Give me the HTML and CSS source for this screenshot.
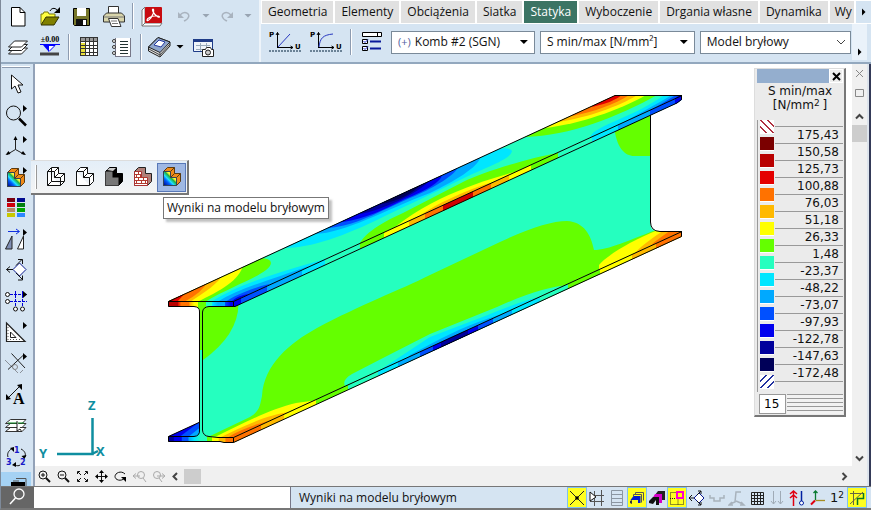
FILE: index.html
```html
<!DOCTYPE html>
<html lang="pl">
<head>
<meta charset="utf-8">
<title>Model bryłowy</title>
<link rel="stylesheet" href="styles.css">
</head>
<body>
<div class="app">
<header class="top">
  <div class="tools">
    <div class="tool-row">
      <button class="tool" aria-label="Nowy"><svg width="28" height="26" viewBox="0 0 28 26"><path d="M7.5 4.500h8.500l5 5v13.500h-13.500z" fill="#fff" stroke="#000"/><path d="M16 4.500v5h5" fill="none" stroke="#000"/></svg></button>
      <button class="tool" aria-label="Otwórz"><svg width="28" height="26" viewBox="0 0 28 26"><path d="M5 21V11h2l1-2h4l1 2h6v3" fill="#ffff40" stroke="#77770a"/><path d="M5 22l5-8h13l-5 8z" fill="#808000" stroke="#333300"/><path d="M14 8c2-4 6-3 8 0" fill="none" stroke="#000"/><path d="M24 4v6h-6z"/></svg></button>
      <button class="tool" aria-label="Zapisz"><svg width="28" height="26" viewBox="0 0 28 26"><path d="M5.500 5.500h16v17h-15l-1-1z" fill="#77772a" stroke="#000"/><path d="M9 5h9v8H9z" fill="#fff"/><path d="M8 16h11v6H8z" fill="#111"/><path d="M15 17h3v5h-3z" fill="#fff"/></svg></button>
      <button class="tool" aria-label="Drukuj"><svg width="28" height="26" viewBox="0 0 28 26"><path d="M8.500 10V3.500h10V10" fill="#fff" stroke="#333"/><path d="M3.500 13l3-3h15l3 3v6h-21z" fill="#d8d4aa" stroke="#333"/><path d="M4 14h20" stroke="#777"/><path d="M8.500 15.500h9.500l3 8h-9.500z" fill="#fff" stroke="#333"/><path d="M11 18h6M12 20.500h6" stroke="#777"/></svg></button>
      <i class="sep"></i>
      <button class="tool" aria-label="PDF"><svg width="28" height="26" viewBox="0 0 28 26"><path d="M4 7l3-3v16l-3 3z" fill="#fff" stroke="#777"/><path d="M4 23l3-3h17l-2 3z" fill="#fff" stroke="#777"/><rect x="7" y="4" width="17" height="16" rx="1" fill="#c80b10"/><path d="M15 6c-1.500 0 0 5 5 8 3 1 1-2-3-1-3 0-8 2-8 4s4-1 6-6c.7-2 1-5 0-5z" fill="none" stroke="#fff" stroke-width="1.200"/></svg></button>
      <button class="tool" aria-label="Cofnij"><svg width="28" height="26" viewBox="0 0 28 26"><path d="M10 12c5-5 11-1 8 3-1 2-2 2-4 3" fill="none" stroke="#a9b3bf" stroke-width="1.500"/><path d="M8 9v6h6z" fill="#a9b3bf"/></svg></button>
      <i class="caret dim"></i>
      <button class="tool slim" aria-label="Ponów"><svg width="28" height="26" viewBox="0 0 28 26"><path d="M18 12c-5-5-11-1-8 3 1 2 2 2 4 3" fill="none" stroke="#a9b3bf" stroke-width="1.500"/><path d="M20 9v6h-6z" fill="#a9b3bf"/></svg></button>
      <i class="caret dim"></i>
    </div>
    <div class="tool-row">
      <button class="tool" aria-label="Warstwy"><svg width="28" height="26" viewBox="0 0 28 26"><g fill="#fff" stroke="#222"><path d="M4.500 20l6-6h13l-6 6z"/><path d="M4.500 16.500l6-6h13l-6 6z"/><path d="M4.500 13l6-6h13l-6 6z"/></g></svg></button>
      <button class="tool" aria-label="Poziom"><svg width="28" height="26" viewBox="0 0 28 26"><text x="14" y="8" class="level" text-anchor="middle">±0.00</text><path d="M4 10.500h20" stroke="#00f"/><path d="M7 11h6v7z" fill="#00f"/><path d="M13 17.500l6-6h-6" fill="#fff" stroke="#00f"/><path d="M4 18.500h19v3H4z" fill="#444"/></svg></button>
      <i class="sep"></i>
      <button class="tool wide" aria-label="Tabela"><svg width="28" height="26" viewBox="0 0 28 26"><path d="M5 3h18v19H5z" fill="#fff"/><path d="M5 3h18v5H5z" fill="#999"/><path d="M5 9h6v13H5z" fill="#e8e03c"/><path d="M5.500 3v19M10.500 3v19M14.500 3v19M18.500 3v19M22.500 3v19M5 3.500h18M5 7.500h18M5 11.500h18M5 14.500h18M5 18.500h18M5 21.500h18" stroke="#333"/></svg></button>
      <button class="tool wide" aria-label="Raport"><svg width="28" height="26" viewBox="0 0 28 26"><path d="M7 4h16v18H7z" fill="#fff"/><path d="M7.500 4v18M22.500 4v19M7 22.500h16" stroke="#778"/><path d="M12 7.500h8M12 10.500h8M12 13.500h8M12 16.500h8M12 19.500h8" stroke="#233" /><g fill="#fff" stroke="#333"><circle cx="6" cy="7" r="1.500"/><circle cx="6" cy="13" r="1.500"/><circle cx="6" cy="19" r="1.500"/></g></svg></button>
      <i class="sep"></i>
      <button class="tool slim" aria-label="Biblioteka"><svg width="28" height="26" viewBox="0 0 28 26"><path d="M3.500 13L13 3.500 25 8v4L15 23 3.500 17z" fill="#ddd" stroke="#222"/><path d="M3.500 13L13 3.500 25 8 15 18.500z" fill="#8fa6cc" stroke="#222"/><path d="M9 11l5-5 6 2-4 5z" fill="#fff" stroke="#2338a0"/><path d="M15 18.500v4M4 15l11 6 10-11" fill="none" stroke="#444"/></svg></button>
      <i class="caret"></i>
      <button class="tool wide" aria-label="Zrzut ekranu"><svg width="28" height="26" viewBox="0 0 28 26"><path d="M4.500 5.500h19v12h-19z" fill="#eef4fa" stroke="#1f3c88"/><path d="M4 5h20v3H4z" fill="#1f3c88"/><path d="M7 11.500h14M7 15.500h8M11.500 9v8M17.500 9v4" stroke="#9ab"/><path d="M13.500 15.500h3l1-2h4l1 2h2v7h-11z" fill="#fff" stroke="#222"/><circle cx="19" cy="18.500" r="2.500" fill="#ccc" stroke="#222"/></svg></button>
    </div>
  </div>
  <div class="ribbon">
    <nav class="tabs">
      <button class="tab">Geometria</button><button class="tab">Elementy</button><button class="tab">Obciążenia</button><button class="tab">Siatka</button><button class="tab on">Statyka</button><button class="tab">Wyboczenie</button><button class="tab">Drgania własne</button><button class="tab">Dynamika</button><button class="tab cut">Wy</button>
      <button class="more" aria-label="Więcej zakładek"><i class="play"></i></button>
    </nav>
    <div class="ribbon-row">
      <button class="curve" aria-label="Analiza liniowa"><svg width="34" height="24" viewBox="0 0 34 24"><path d="M9.500 18V2.500M8 5l1.500-2.500L11 5M9 17.500h16M22.500 16l2.500 1.500-2.500 1.500" fill="none" stroke="#000"/><path d="M10 17L22 4" stroke="#2838c0"/><path d="M1 21h32" stroke="#6b8296" stroke-width="2" stroke-dasharray="2 1"/><text x="1" y="7" class="mini">P</text><text x="27" y="19" class="mini">U</text></svg></button>
      <button class="curve second" aria-label="Analiza nieliniowa"><svg width="34" height="24" viewBox="0 0 34 24"><path d="M9.500 18V2.500M8 5l1.500-2.500L11 5M9 17.500h16M22.500 16l2.500 1.500-2.500 1.500" fill="none" stroke="#000"/><path d="M10 17C11 8 14 5 24 4" fill="none" stroke="#2838c0"/><path d="M1 21h32" stroke="#6b8296" stroke-width="2" stroke-dasharray="2 1"/><text x="1" y="7" class="mini">P</text><text x="27" y="19" class="mini">U</text></svg></button>
      <i class="sep"></i>
      <button class="curve opts" aria-label="Opcje wyników"><svg width="22" height="22" viewBox="0 0 22 22"><path d="M1.500 1.500h19v4h-19z" fill="#fff" stroke="#000"/><path d="M16.500 1v5" stroke="#000"/><g fill="#fff" stroke="#000"><path d="M1.500 8.500h5v4h-5zM1.500 15.500h5v4h-5z"/></g><path d="M9 10.500h11M9 17.500h11" stroke="#0a1a9a" stroke-width="2"/><path d="M2.500 10l1.500 1.500 3-3M2.500 17l1.500 1.500 3-3" fill="none" stroke="#2030d0"/></svg></button>
      <label class="combo c1"><span class="plus">(+)</span><select aria-label="Kombinacja"><option>Komb #2 (SGN)</option></select><i class="caret"></i></label>
      <label class="combo c2"><select aria-label="Wielkość"><option>S min/max [N/mm²]</option></select><i class="caret"></i></label>
      <label class="combo c3"><select aria-label="Model"><option>Model bryłowy</option></select><svg class="chev" width="10" height="6" viewBox="0 0 10 6"><path d="M1 1l4 4 4-4" fill="none" stroke="#444"/></svg></label>
      <button class="more low" aria-label="Więcej"><i class="play"></i></button>
    </div>
  </div>
</header>

<main class="work">
  <aside class="side">
    <i class="grip"></i>
    <button aria-label="Wybór"><svg width="28" height="28" viewBox="0 0 28 28"><path d="M9.500 4v14l3.500-3 3 7 3-1-3-7h5z" fill="#fff" stroke="#111"/></svg></button>
    <button aria-label="Powiększenie"><svg width="28" height="28" viewBox="0 0 28 28"><circle cx="11.500" cy="11" r="7" fill="none" stroke="#111"/><path d="M17 16.500l7 7" stroke="#000" stroke-width="2.500"/><path d="M21 3l4 3.500-4 3.500z"/></svg></button>
    <button aria-label="Widok"><svg width="28" height="28" viewBox="0 0 28 28"><path d="M13.500 5v11.500L5 21.500M13.500 16.500l9 5" fill="none" stroke="#222"/><path d="M13.500 3l2 4h-4zM3.500 22l3-4 2 3zM24 22l-3-4-2 3zM21 3l4 3.500-4 3.500z"/></svg></button>
    <button aria-label="Tryb wyników"><svg width="28" height="28" viewBox="0 0 28 28"><use href="#solid-result"/><path d="M21 3l4 3.500-4 3.500z"/></svg></button>
    <button aria-label="Kolory"><svg width="28" height="28" viewBox="0 0 28 28"><path fill="#7a0010" d="M5 3h8v4H5z"/><path fill="#000a90" d="M15 3h8v4h-8z"/><path fill="#d0000c" d="M5 8h8v4H5z"/><path fill="#008010" d="M15 8h8v4h-8z"/><path fill="#b58a68" d="M5 13h8v4H5z"/><path fill="#00a800" d="M15 13h8v4h-8z"/><path fill="#c8c800" d="M5 18h8v4H5z"/><path fill="#2c86ff" d="M15 18h8v4h-8z"/></svg></button>
    <button aria-label="Lustro"><svg width="28" height="28" viewBox="0 0 28 28"><path d="M6 5.500h11M14 3l3.500 2.500L14 8" fill="none" stroke="#1030e0"/><path d="M3.500 23h6.500V10z" fill="#7f8eb4" stroke="#222"/><path d="M15.500 23h6V10z" fill="#fff" stroke="#222"/><path d="M21 3l4 3.500-4 3.500z"/></svg></button>
    <button aria-label="Przekrój"><svg width="28" height="28" viewBox="0 0 28 28"><path d="M17.500 6l6.500 6.500-6.500 6.500-6.500-6.500z" fill="#fff" stroke="#0a1a90"/><path d="M11 12.500H4.500M8 9.500l-3.500 3 3.500 3M14 8.500l6-6M16 2.500h4.500V7M14 16l6.500 6.500M16 23h4.500v-4.500" fill="none" stroke="#111"/></svg></button>
    <button aria-label="Osie konstrukcyjne"><svg width="28" height="28" viewBox="0 0 28 28"><path d="M8 6.500h17M8 13.500h17M13.500 3v15M20.500 3v15" stroke="#0000d8" stroke-dasharray="3 1"/><g fill="#fff" stroke="#111"><circle cx="5.500" cy="6.500" r="2"/><circle cx="5.500" cy="13.500" r="2"/><circle cx="13.500" cy="21" r="2"/><circle cx="20.500" cy="21" r="2"/></g><path d="M21 3l4 3.500-4 3.500z"/></svg></button>
    <button aria-label="Geometria"><svg width="28" height="28" viewBox="0 0 28 28"><path d="M4.500 4v18.500H23z" fill="#fff" stroke="#222" stroke-width="1.200"/><path d="M8.500 13v5.500H14z" fill="none" stroke="#222"/><path d="M6 8v13M8 20.500h12" stroke="#555" stroke-dasharray="1 2"/><path d="M21 3l4 3.500-4 3.500z"/></svg></button>
    <button aria-label="Edycja linii"><svg width="28" height="28" viewBox="0 0 28 28"><path d="M3 10l13 13M18 23l3-3" stroke="#8b9199"/><path d="M9.500 3.500L23 18M6 19.500L21 5.500" stroke="#222"/><circle cx="13" cy="17" r="2.500" fill="none" stroke="#888"/><path d="M21 3l4 3.500-4 3.500z"/></svg></button>
    <button aria-label="Opis"><svg width="28" height="28" viewBox="0 0 28 28"><path d="M6 17L18 5" stroke="#111"/><path d="M4 19v-6l5 5zM20 3v6l-5-5z"/><text x="11" y="23" class="serif-a">A</text></svg></button>
    <button aria-label="Warstwy"><svg width="28" height="28" viewBox="0 0 28 28"><g fill="#fff" stroke="#333"><path d="M3.500 19.500l5-4H24l-4 4z"/><path d="M3.500 15.500l5-4H24l-4 4z"/><path d="M3.500 11.500l5-4H24l-4 4z"/></g><path d="M6 11h16" stroke="#0a8a20"/><path d="M15 9v10l3-2 2 3" fill="#fff" stroke="#222"/></svg></button>
    <button aria-label="Numeracja"><svg width="28" height="28" viewBox="0 0 28 28"><path d="M10 5.500C6 8 5 11 6 14M19 6c4 2 5 5 4 8M18 22c-1 1-3 1-5 0" fill="none" stroke="#111"/><path d="M12 4v5L8 5zM24.500 12l-2 4-3-3zM10 22l4-3v5z"/><text x="12" y="10" class="num">1</text><text x="4" y="22" class="num">3</text><text x="18" y="22" class="num">2</text></svg></button>
    <button class="lit" aria-label="Okna"><svg width="28" height="28" viewBox="0 0 28 28"><path d="M14 4.500h10v8M17 7h-6" fill="none" stroke="#555"/><path d="M9 8h14v6H9z"/></svg></button>
  </aside>

  <section class="stage">
    <svg class="model" viewBox="35 64 817 402" preserveAspectRatio="xMinYMin meet" role="img" aria-label="Model belki dwuteowej z mapą naprężeń">
      <defs>
        <clipPath id="topFace"><path d="M168 301.500L615 95.500H682L233.500 301.500z"/></clipPath>
        <clipPath id="topSide"><path d="M233.500 301.500L682 95.500V99.500L677 103 235 306.500h-1.500z"/></clipPath>
        <clipPath id="web"><path d="M203 312Q203 306.500 209 306.500H235L650.500 115V225Q651 231.500 660 231.500H682L233.500 437.500 209 436.500Q203 436 203 430z"/></clipPath>
        <clipPath id="lowSide"><path d="M233.500 437.500L682 231.500V236.500L233.500 442.500z"/></clipPath>
        <clipPath id="lowFace"><path d="M168 436.500L200 422V430Q200 436.500 194 436.500z"/></clipPath>
        <linearGradient id="cap" gradientUnits="userSpaceOnUse" x1="168" x2="234" y1="0" y2="0"><stop offset=".15" stop-color="#b90000"/><stop offset=".15" stop-color="#e40000"/><stop offset=".2" stop-color="#ff7200"/><stop offset=".31" stop-color="#ff7200"/><stop offset=".34" stop-color="#ffb900"/><stop offset=".4" stop-color="#ffff00"/><stop offset=".46" stop-color="#ffff00"/><stop offset=".46" stop-color="#64ff00"/><stop offset=".57" stop-color="#64ff00"/><stop offset=".57" stop-color="#25ffbf"/><stop offset=".67" stop-color="#25ffbf"/><stop offset=".67" stop-color="#00e6ff"/><stop offset=".76" stop-color="#00a9ff"/><stop offset=".86" stop-color="#00a9ff"/><stop offset=".86" stop-color="#0050ff"/><stop offset=".95" stop-color="#0000ee"/></linearGradient>
        <linearGradient id="foot" gradientUnits="userSpaceOnUse" x1="168" x2="234" y1="0" y2="0"><stop offset=".08" stop-color="#00009c"/><stop offset=".1" stop-color="#0000ee"/><stop offset=".2" stop-color="#0000ee"/><stop offset=".22" stop-color="#0050ff"/><stop offset=".3" stop-color="#0050ff"/><stop offset=".32" stop-color="#00a9ff"/><stop offset=".4" stop-color="#00e6ff"/><stop offset=".5" stop-color="#25ffbf"/><stop offset=".59" stop-color="#25ffbf"/><stop offset=".59" stop-color="#64ff00"/><stop offset=".67" stop-color="#64ff00"/><stop offset=".67" stop-color="#ffff00"/><stop offset=".76" stop-color="#ffff00"/><stop offset=".78" stop-color="#ffb900"/><stop offset=".86" stop-color="#ffb900"/><stop offset=".88" stop-color="#ff7200"/></linearGradient>
      </defs>

      <g clip-path="url(#web)">
        <path fill="#25ffbf" d="M190 90H700V450H190z"/>
        <path fill="#64ff00" d="M238.500 304Q238 335 203 360V300z"/>
        <path fill="#64ff00" d="M614 125C616 148 625 156 634 156H651V110z"/>
        <path fill="#64ff00" d="M208 437L250 417C260 411 260 405 262 396C264 364 290 343 317 328C360 305 400 290 430 275L500 242C530 228 552 221 567 221C584 222 591 235 594 250C608 250 630 240 656 230L690 225V260L233 445z"/>
        <path fill="#ffff00" d="M213 438C240 425 270 409 296 403L318 400V450H213z"/>
        <path fill="#ffb900" d="M219 438C245 425 270 414 290 412L280 425V450H219z"/>
        <path fill="#ff7200" d="M227 438C240 429 258 424 268 421L250 450H227z"/>
        <path fill="#25ffbf" d="M350 390C342 386 342 380 352 374L383 358 430 334 497 307C530 292 550 287 568 285L566 300 360 400z"/>
        <path fill="#00e6ff" d="M377 380V372L430 337 480 318C510 306 528 299 541 297L520 320 380 385z"/>
        <path fill="#00a9ff" d="M397 370L410 355 440 339C470 324 495 315 513 312L480 340 400 375z"/>
        <path fill="#0050ff" d="M417 360C425 349 445 339 460 333C475 326 486 323 495 321L470 345z"/>
        <path fill="#0000ee" d="M430 352C440 341 458 333 480 327L460 347z"/>
        <path fill="#00009c" d="M440 347C445 340 458 335 468 332L458 345z"/>
        <path fill="#ffff00" d="M599 275V265C605 257 630 241 658 230H690V260L610 275z"/>
        <path fill="#ffb900" d="M632 258C635 250 650 240 664 230H690V255z"/>
        <path fill="#ff7200" d="M650 247C653 242 663 236 671 230H690V245z"/>
      </g>

      <g clip-path="url(#topFace)">
        <path fill="#25ffbf" d="M160 90H700V310H160z"/>
        <path fill="#64ff00" d="M160 310L205 302C235 284 270 274 271 263Q271 258 258 258L160 290z"/>
        <path fill="#ffff00" d="M160 310L197 302C220 291 240 280 243 265L160 290z"/>
        <path fill="#ffb900" d="M160 310L190 302C205 292 218 284 224 273L160 290z"/>
        <path fill="#ff7200" d="M160 310L184 302Q203 292 208 281L160 290z"/>
        <path fill="#e40000" d="M160 310L177 302 188 290 160 295z"/>
        <path fill="#b90000" d="M160 310L172 302 178 295 160 295z"/>
        <path fill="#00e6ff" d="M211 302C240 283 280 272 332 257L320 275 240 305z"/>
        <path fill="#00a9ff" d="M217 302C240 288 270 280 309 266L295 280 240 305z"/>
        <path fill="#0050ff" d="M225 302C235 295 255 287 270 284L240 305z"/>
        <path fill="#0000ee" d="M231 302C236 297 242 295 248 294L240 305z"/>
        <path fill="#00e6ff" d="M285 248C310 248 345 236 383 217C410 204 430 195 460 180C490 165 510 160 512 151Q510 146 490 150L440 160 280 235z"/>
        <path fill="#00a9ff" d="M315 234C345 233 385 210 430 193C455 181 478 167 480 158L440 160 300 225z"/>
        <path fill="#0050ff" d="M329 228C360 225 385 208 415 196C435 187 455 175 458 167L440 160 300 220z"/>
        <path fill="#0000ee" d="M343 222C365 219 385 209 405 199Q440 185 442 175L430 165 330 215z"/>
        <path fill="#00009c" d="M360 214C380 211 420 193 431 179L420 170z"/>
        <path fill="#000058" d="M382 204C397 201 412 194 422 184L415 175z"/>
        <path fill="#64ff00" d="M358 250C358 237 380 223 403 213L463 182C485 171 530 158 558 153L550 165 370 255z"/>
        <path fill="#ffff00" d="M380 242C392 227 415 211 440 199 470 185 500 175 535 167L500 190z"/>
        <path fill="#ffb900" d="M405 230C415 216 435 205 460 194Q485 183 510 178L480 200z"/>
        <path fill="#ff7200" d="M425 220C435 210 455 200 492 186L460 210z"/>
        <path fill="#e40000" d="M440 215C447 206 460 199 475 195z"/>
        <path fill="#64ff00" d="M525 137C570 136 620 116 659 94H600L520 130z"/>
        <path fill="#ffff00" d="M545 128C580 124 620 110 648 94H600L530 125z"/>
        <path fill="#ffb900" d="M558 122C590 117 620 106 639 94H600L550 115z"/>
        <path fill="#ff7200" d="M572 116C595 112 617 103 631 94H600L560 110z"/>
        <path fill="#e40000" d="M592 107Q615 102 623 94H600z"/>
        <path fill="#b90000" d="M604 101L617 94H605z"/>
        <path fill="#00e6ff" d="M590 140C587 127 630 120 666 94H690V100L600 145z"/>
        <path fill="#00a9ff" d="M612 130C625 120 655 106 673 94H690V100z"/>
        <path fill="#0050ff" d="M645 114C655 107 670 99 677 94H690V100z"/>
        <path fill="#0000ee" d="M666 105L681 94H690V100z"/>
      </g>

      <g clip-path="url(#topSide)">
        <path fill="#25ffbf" d="M230 90H690V310H230z"/>
        <path fill="#00e6ff" d="M230 250H325V310H230z"/><path fill="#00a9ff" d="M230 250H302V310H230z"/><path fill="#0050ff" d="M230 250H267V310H230z"/><path fill="#0000ee" d="M230 250H241V310H230z"/>
        <path fill="#64ff00" d="M360 150H558V260H360z"/><path fill="#ffff00" d="M384 160H531V260H384z"/><path fill="#ffb900" d="M409 160H509V260H409z"/><path fill="#ff7200" d="M425 160H491V260H425z"/><path fill="#d00000" d="M443 160H473V260H443z"/>
        <path fill="#00e6ff" d="M592 90H690V150H592z"/><path fill="#00a9ff" d="M618 90H690V150H618z"/><path fill="#0050ff" d="M650 90H690V150H650z"/><path fill="#0000ee" d="M675 90H690V150H675z"/>
      </g>

      <g clip-path="url(#lowSide)">
        <path fill="#64ff00" d="M230 220H690V450H230z"/>
        <path fill="#ffff00" d="M230 390H316V450H230z"/><path fill="#ffb900" d="M230 390H284V450H230z"/><path fill="#ff7200" d="M230 390H261V450H230z"/>
        <path fill="#25ffbf" d="M348 280H568V400H348z"/><path fill="#00e6ff" d="M378 280H540V400H378z"/><path fill="#00a9ff" d="M398 280H512V400H398z"/><path fill="#0050ff" d="M420 280H493V400H420z"/><path fill="#0000ee" d="M433 280H478V400H433z"/><path fill="#00009c" d="M441 280H468V400H441z"/>
        <path fill="#ffff00" d="M600 220H690V280H600z"/><path fill="#ffb900" d="M632 220H690V280H632z"/><path fill="#ff7200" d="M656 220H690V280H656z"/>
      </g>

      <g clip-path="url(#lowFace)">
        <path fill="#0000ee" d="M165 420H202V438H165z"/>
        <path fill="#0050ff" d="M178 438L202 420V438z"/><path fill="#00a9ff" d="M187 438L202 426V438z"/><path fill="#00e6ff" d="M194 438L202 431V438z"/>
      </g>

      <path fill="url(#cap)" d="M168 301.500H233.500V306.500H209Q203.500 307 203 312H200Q200 307 194 306.500H168z"/>
      <path fill="#64ff00" d="M200 311H203V350H200z"/><path fill="#25ffbf" d="M200 350H203V431H200z"/>
      <path fill="url(#foot)" d="M168 441.500V436.500H194Q200 436 200 430H203Q203 436 209 436.500L218 437.500H233.500V442.500H224L220 441.500z"/>

      <g fill="none" stroke="#000">
        <path d="M168.500 301.500L615 95.500H681.500V99.500L677 103 235 306.500H209Q203 307 202.500 312V430Q203 436 209 436.500L218 437.500H233.500V442.500H224L220 441.500H168.500V436.500H194Q200 436 199.500 430V312Q200 307 194 306.500H168.500V301.500H233.500L682 95.500M233.500 301.500V306.500"/>
        <path d="M168.500 436.500L200 422M233.500 437.500L682 231.500M233.500 442.500L681.500 236.500V231.500H660Q650.500 231 650.500 222V115"/>
      </g>

      <g class="axes"><path d="M92.500 418V454H57M92 454l6-3" fill="none" stroke="#0f8ea0" stroke-width="2.500"/><text x="88" y="410">Z</text><text x="39" y="458">Y</text><text x="96" y="456">X</text></g>
    </svg>

    <div class="viewbar">
      <button aria-label="Powiększ"><svg width="15" height="15" viewBox="0 0 15 15"><g fill="none" stroke="#111"><circle cx="6" cy="6" r="4"/><path d="M4 6h4M6 4v4"/><path d="M9 9l4 4" stroke-width="2"/></g></svg></button>
      <button aria-label="Pomniejsz"><svg width="15" height="15" viewBox="0 0 15 15"><g fill="none" stroke="#111"><circle cx="6" cy="6" r="4"/><path d="M4 6h4"/><path d="M9 9l4 4" stroke-width="2"/></g></svg></button>
      <button aria-label="Dopasuj"><svg width="15" height="15" viewBox="0 0 15 15"><path d="M2.500 5V2.500H5M10 2.500h2.500V5M12.500 10v2.500H10M5 12.500H2.500V10M3 3l3 3M12 3L9 6M12 12L9 9M3 12l3-3" fill="none" stroke="#111"/></svg></button>
      <button aria-label="Przesuń"><svg width="15" height="15" viewBox="0 0 15 15"><path d="M7.500 2v11M2 7.500h11" stroke="#111"/><path d="M7.500 1l2.500 3H5zM7.500 14l2.500-3H5zM1 7.500L4 5v5zM14 7.500L11 5v5z"/></svg></button>
      <button aria-label="Obróć"><svg width="15" height="15" viewBox="0 0 15 15"><path d="M12 5C8 1 2 4 2 7.500S8 13 12 9" fill="none" stroke="#111"/><path d="M8 8h5v5z"/></svg></button>
      <button aria-label="Poprzedni widok"><svg width="15" height="15" viewBox="0 0 15 15"><g fill="none" stroke="#aaa"><circle cx="9" cy="6" r="3.500"/><path d="M11 9l3 4M1 7h7M4 4.500L1 7l3 2.500"/></g></svg></button>
      <button aria-label="Następny widok"><svg width="15" height="15" viewBox="0 0 15 15"><g fill="none" stroke="#aaa"><circle cx="6" cy="6" r="3.500"/><path d="M8 9l3 4M6 7h7M11 4.500L14 7l-3 2.500"/></g></svg></button>
      <svg class="end" width="15" height="15" viewBox="0 0 15 15"><path d="M9 4L5.500 7.500 9 11" fill="none" stroke="#444" stroke-width="2"/></svg>
      <i class="hthumb"></i>
      <svg class="end right" width="15" height="15" viewBox="0 0 15 15"><path d="M5.500 4L9 7.500 5.500 11" fill="none" stroke="#444" stroke-width="2"/></svg>
    </div>

    <section class="legend" aria-label="Legenda">
      <div class="legend-bar"><button aria-label="Zamknij legendę"><svg width="9" height="9" viewBox="0 0 9 9"><path d="M1 1l7 7M8 1L1 8" stroke="#000" stroke-width="2"/></svg></button></div>
      <p class="legend-title">S min/max<br>[N/mm<sup>2 </sup>]</p>
      <div class="scale">
        <ul class="swatches">
          <li class="over"></li><li class="s1"></li><li class="s2"></li><li class="s3"></li><li class="s4"></li><li class="s5"></li><li class="s6"></li><li class="s7"></li><li class="s8"></li><li class="s9"></li><li class="s10"></li><li class="s11"></li><li class="s12"></li><li class="s13"></li><li class="s14"></li><li class="under"></li>
        </ul>
        <ul class="values">
          <li>175,43</li><li>150,58</li><li>125,73</li><li>100,88</li><li>76,03</li><li>51,18</li><li>26,33</li><li>1,48</li><li>-23,37</li><li>-48,22</li><li>-73,07</li><li>-97,93</li><li>-122,78</li><li>-147,63</li><li>-172,48</li>
        </ul>
      </div>
      <div class="levels"><input value="15" aria-label="Liczba poziomów"><i class="stripes"></i></div>
    </section>
  </section>

  <div class="vbar">
    <button aria-label="Zamknij"><svg width="9" height="9" viewBox="0 0 9 9"><path d="M1 1l7 7M8 1L1 8" stroke="#888"/></svg></button>
    <button aria-label="Maksymalizuj"><svg width="9" height="9" viewBox="0 0 9 9"><path d="M.5 1.500h8v7h-8z" fill="none" stroke="#888"/></svg></button>
    <svg class="up" width="9" height="7" viewBox="0 0 9 7"><path d="M1 5.500L4.500 2 8 5.500" fill="none" stroke="#444" stroke-width="2"/></svg>
    <i class="vthumb"></i>
    <svg class="down" width="9" height="7" viewBox="0 0 9 7"><path d="M1 1.500L4.500 5 8 1.500" fill="none" stroke="#444" stroke-width="2"/></svg>
  </div>

  <div class="flyout">
    <i class="fgrip"></i>
    <button aria-label="Model krawędziowy"><svg width="28" height="28" viewBox="0 0 28 28"><path d="M5.500 8.500v14h13v-8h-6v-6zM5.500 8.500l4-4h7v6h6v8l-4 4M12.500 8.500l4-4M12.500 14.500l4-4M18.500 14.500l4-4" fill="#fff" stroke="#111"/><path d="M9.500 5v13.500H22M9.500 18.500l-4 4" fill="none" stroke="#111"/></svg></button>
    <button aria-label="Model z ukrytymi liniami"><svg width="28" height="28" viewBox="0 0 28 28"><path d="M5.500 8.500v14h13v-8h-6v-6zM5.500 8.500l4-4h7v6h6v8l-4 4M12.500 8.500l4-4M12.500 14.500l4-4M18.500 14.500l4-4" fill="#fff" stroke="#111"/></svg></button>
    <button aria-label="Model cieniowany"><svg width="28" height="28" viewBox="0 0 28 28"><path d="M5.500 8.500l4-4h7v6h6v8l-4 4h-13z" fill="#000" stroke="#000"/><path d="M5.500 8.500h7v6h6v8h-13z" fill="#777"/><path d="M7 7l2.500-2H16l-3 3z" fill="#ccc"/></svg></button>
    <button aria-label="Model materiałowy"><svg width="28" height="28" viewBox="0 0 28 28"><path d="M5.500 8.500l4-4h7v6h6v8l-4 4h-13z" fill="#b08078" stroke="#222"/><path d="M5.500 8.500h7v6h6v8h-13z" fill="#fff" stroke="#a33"/><path d="M6 11.500h6M6 14.500h12M6 17.500h12M6 20.500h12M9.500 9v3M7.500 12v3M11.500 12v3M9.500 15v3M14.500 15v3M7.500 18v3M12.500 18v3M16.500 18v3" stroke="#b33a2e"/></svg></button>
    <button class="picked" aria-label="Wyniki na modelu bryłowym"><svg width="28" height="28" viewBox="0 0 28 28"><use href="#solid-result"/></svg></button>
  </div>
  <div class="tip" role="tooltip">Wyniki na modelu bryłowym</div>
</main>

<footer class="status">
  <label class="find"><svg width="20" height="20" viewBox="0 0 20 20"><circle cx="12" cy="7" r="5" fill="none" stroke="#fff" stroke-width="1.300"/><path d="M8.500 11L3 17" stroke="#fff" stroke-width="1.500"/></svg><input aria-label="Szukaj"></label>
  <span class="hint">Wyniki na modelu bryłowym</span>
  <div class="snaps">
    <button class="y" aria-label="Przecięcie"><svg width="18" height="18" viewBox="0 0 18 18"><path d="M2 2l14 14M16 2L2 16" stroke="#222"/><circle cx="9" cy="9" r="1.800"/></svg></button>
    <button aria-label="Siatka kursora"><svg width="18" height="18" viewBox="0 0 18 18"><path d="M6.500 2v15M13.500 1v16M2 6.500h14M2 12.500h14" stroke="#555"/><path d="M2 3v9l6-4z" fill="#fff" stroke="#111"/></svg></button>
    <button aria-label="Lista"><svg width="18" height="18" viewBox="0 0 18 18"><path d="M3.500 1.500h11v15h-11zM3 5.500h12M3 9.500h12M3 13.500h12" fill="none" stroke="#8b96a2"/></svg></button>
    <button class="y" aria-label="Warstwy"><svg width="18" height="18" viewBox="0 0 18 18"><path d="M7.500 5V3.500h8v8M5.500 7V5.500h8v8" fill="none" stroke="#555"/><path d="M2.500 11l3-4h7v7h-2.500v-3z" fill="#0018d0"/><path d="M2 14v-2l2-1v4z" fill="#334"/></svg></button>
    <button aria-label="Grupy"><svg width="18" height="18" viewBox="0 0 18 18"><path d="M7 6l3-4h7v9h-3V6z" fill="#222"/><path d="M4 10l3-5h7v9h-3V9z" fill="#d400c8"/><path d="M1 14v-2l4-4h6v8H8v-5l-3 4z" fill="#111"/></svg></button>
    <button class="y" aria-label="Części"><svg width="18" height="18" viewBox="0 0 18 18"><path d="M2.500 3.500h13v12h-13zM2 9.500h8V16" fill="none" stroke="#222" stroke-dasharray="1 1"/><path d="M9 3h6v6H9z" fill="#ff0" stroke="#f0c" stroke-width="2"/></svg></button>
    <button aria-label="Przekroje"><svg width="18" height="18" viewBox="0 0 18 18"><path d="M11 4l5 5-5 5-5-5z" fill="#fff" stroke="#0a1a90"/><path d="M6 9H1M4 6L1 9l3 3M9 6l4-4h-3M13 2v3M9 12l4 4h-3M13 16v-3" fill="none" stroke="#111"/></svg></button>
    <button aria-label="Obciążenia"><svg width="18" height="18" viewBox="0 0 18 18"><path d="M2 6v3h4v3h6V9h4V6" fill="none" stroke="#a8b2bc" stroke-width="1.500"/></svg></button>
    <button aria-label="Podpory"><svg width="18" height="18" viewBox="0 0 18 18"><path d="M2 15l5-2 1-10h5M8 12l7 3M4 13l-3 3h4M13 13l3 3h-4" fill="none" stroke="#a8b2bc" stroke-width="1.500"/></svg></button>
    <button aria-label="Siatka"><svg width="18" height="18" viewBox="0 0 18 18"><path d="M3.500 3.500h12v12h-12zM6.500 3v13M9.500 3v13M12.500 3v13M3 6.500h13M3 9.500h13M3 12.500h13" fill="none" stroke="#222"/></svg></button>
    <button aria-label="Siły"><svg width="18" height="18" viewBox="0 0 18 18"><path d="M5.500 2v13M3 12l2.500 3L8 12M12.500 2v13M10 12l2.500 3 2.500-3" fill="none" stroke="#a0abb6"/></svg></button>
    <button aria-label="Symbole"><svg width="18" height="18" viewBox="0 0 18 18"><path d="M5.500 2v15M2 5l3.500-3L9 5M2 9l3.500-3L9 9" fill="none" stroke="#e00010" stroke-width="1.500"/><path d="M13.500 2v10" stroke="#0020a0" stroke-width="1.500"/><circle cx="13.500" cy="14" r="2" fill="#fff" stroke="#0020a0"/></svg></button>
    <button aria-label="Układ lokalny"><svg width="18" height="18" viewBox="0 0 18 18"><path d="M7.500 2v9M5.500 4l2-2 2 2" fill="none" stroke="#087a30" stroke-width="1.300"/><path d="M7.500 11.500H17" stroke="#a68c20" stroke-width="1.300"/><path d="M7 11.500l-4 4" stroke="#e00010" stroke-width="2"/></svg></button>
    <button class="pow" aria-label="Numery">1<sup>2</sup></button>
    <button class="y" aria-label="Informacje"><svg width="18" height="18" viewBox="0 0 18 18"><path d="M2 4.500h14M5.500 2v14M2 15L15 3" stroke="#664"/><path d="M9.500 16V9.500H15.500V4M9 9.500h6" fill="none" stroke="#087a20" stroke-width="1.500"/></svg></button>
  </div>
</footer>
</div>

<svg class="defs" width="0" height="0" aria-hidden="true"><defs>
  <linearGradient id="spectrum" gradientUnits="userSpaceOnUse" x1="16" y1="11" x2="5" y2="22"><stop offset="0" stop-color="#ffd000"/><stop offset=".2" stop-color="#ffff40"/><stop offset=".32" stop-color="#20b040"/><stop offset=".5" stop-color="#20e0ff"/><stop offset=".65" stop-color="#0060ff"/><stop offset="1" stop-color="#000080"/></linearGradient>
  <g id="solid-result"><path d="M5.500 8.500l4-4h7v6h6v8l-4 4h-13z" fill="#f08a18" stroke="#5a3a10"/><path d="M5.500 8.500h7v6h6v8h-13z" fill="url(#spectrum)" stroke="#345"/><path d="M12.500 8.500l4-4M12.500 14.500l4-4M18.500 14.500l4-4" stroke="#5a3a10"/></g>
</defs></svg>
</body>
</html>
```
FILE: styles.css
```css
* { box-sizing: border-box; }
html, body { margin: 0; height: 100%; }
body { font: 12px/16px "Open Sans", "Noto Sans", sans-serif; color: #111; overflow: hidden; }
button { border: 0; padding: 0; margin: 0; background: none; font: inherit; color: inherit; display: flex; align-items: center; justify-content: center; flex: none; }
svg { display: block; flex: none; }
ul { list-style: none; margin: 0; padding: 0; }
.defs { position: absolute; }

.app { display: flex; flex-direction: column; height: 100vh; background: #d5e4f2; border-left: 1px solid #7e8a9a; border-bottom: 2px solid #777; }

/* header */
.top { display: flex; flex: none; height: 64px; border-bottom: 2px solid #93a8be; }
.tools { width: 260px; flex: none; border-right: 2px solid #eef4fa; }
.tool-row { display: flex; align-items: center; height: 31px; padding-left: 1px; }
.tool { width: 32px; height: 31px; }
.tool.wide { width: 33px; }
.tool.slim { width: 30px; }
.sep { width: 2px; height: 26px; margin: 0 2px; background: #8d9bb0; border-right: 1px solid #fff; flex: none; }
.caret { width: 8px; height: 4px; background: #000; clip-path: polygon(0 0, 100% 0, 50% 100%); flex: none; margin: 0 2px; }
.caret.dim { background: #98a4b2; }
.level { font: bold 8px "Liberation Serif", serif; }
.mini { font: bold 7px "DejaVu Sans", sans-serif; }
.serif-a { font: bold 16px "Liberation Serif", serif; }
.num { font: bold 8px "DejaVu Sans", sans-serif; fill: #1818c8; }

.ribbon { flex: 1; min-width: 0; display: flex; flex-direction: column; }
.tabs { display: flex; gap: 2px; height: 24px; padding: 1px 0 1px 1px; background: #fff; }
.tab { padding: 0 6px; background: #e1e1e1; }
.tab.on { background: #3c7464; color: #fff; }
.tab.cut { flex: 1 1 0; min-width: 0; padding: 0 5px; justify-content: flex-start; }
.more { width: 15px; }
.tabs .more { background: #d5e4f2; }
.play { width: 4px; height: 8px; background: #000; clip-path: polygon(0 0, 100% 50%, 0 100%); }
.ribbon-row { display: flex; align-items: center; flex: 1; gap: 5px; padding: 0 0 2px 7px; }
.curve.second { margin-left: 2px; }
.curve.opts { margin: 0 3px 0 2px; }
.combo { display: flex; align-items: center; height: 23px; background: #fff; border: 1px solid #7a8a99; padding: 0 4px 0 6px; min-width: 0; }
.c1 { flex: 144; }
.c2 { flex: 156; }
.c3 { flex: 152; }
.plus { color: #5060a0; font-size: 11px; margin-right: 4px; }
.combo select { appearance: none; border: 0; background: none; font: inherit; color: inherit; padding: 0; flex: 1; min-width: 0; }
.more.low { height: 36px; margin-left: -4px; margin-right: 4px; background: #eaf2fa; align-items: flex-end; padding-bottom: 4px; }

/* work area */
.work { display: flex; flex: 1; min-height: 0; position: relative; border-right: 2px solid #343a58; }
.side { width: 34px; flex: none; display: flex; flex-direction: column; overflow: hidden; border-right: 2px solid #93a2b8; }
.side button { width: 30px; height: 31px; }
.side .lit { background: #a5d2f4; }
.grip { height: 2px; margin: 2px 3px 1px 1px; background: #fff; border-bottom: 1px solid #8d9bb0; flex: none; }

.stage { position: relative; flex: 1; min-width: 0; display: flex; flex-direction: column; background: #fff; }
.model { width: 100%; flex: 1; min-height: 0; }
.axes text { font: bold 13px "Noto Sans", sans-serif; fill: #0f8ea0; }
.viewbar { display: flex; align-items: center; height: 20px; flex: none; background: #f0f0f0; }
.viewbar button { width: 19px; height: 20px; }
.hthumb { width: 17px; height: 15px; background: #cdcdcd; margin-left: 1px; }
.end.right { margin-left: auto; }

.vbar { width: 17px; flex: none; display: flex; flex-direction: column; align-items: center; background: #f0f0f0; border-right: 2px solid #dde4ec; padding: 5px 0 24px; }
.vbar button { height: 9px; margin-bottom: 10px; }
.up { margin-top: 6px; }
.vthumb { width: 15px; height: 17px; background: #cdcdcd; margin-top: 5px; }
.down { margin-top: auto; }

/* floating legend */
.legend { position: absolute; top: 4px; right: 6px; width: 92px; background: #ebebeb; border: 1px solid #ddd; border-right: 2px solid #777; border-bottom: 2px solid #777; padding: 0 1px 1px 2px; font: 12px/14px "DejaVu Sans", sans-serif; }
.legend-bar { display: flex; justify-content: flex-end; height: 14px; background: #94aece; }
.legend-bar button { width: 14px; background: #eee; border: 1px solid #fff; }
.legend-title { margin: 1px 0 8px; text-align: center; }
.legend-title sup { font-size: 9px; line-height: 0; vertical-align: 3px; }
.scale { display: flex; border-left: 1px solid #999; }
.swatches { width: 17px; padding-left: 2px; }
.swatches li { height: 14px; width: 14px; margin-bottom: 3px; border-bottom: 1px solid #fff; }
.values { flex: 1; margin-top: 6px; border-bottom: 1px solid #999; align-self: flex-start; }
.values li { height: 17px; border-top: 1px solid #999; text-align: right; padding: 1px 4px 0 0; }
.over { background: repeating-linear-gradient(45deg, #fff 0 4px, #b03040 4px 5px); }
.under { background: repeating-linear-gradient(-45deg, #fff 0 4px, #2030a0 4px 5px); }
.s1 { background: #7b0000; } .s2 { background: #b90000; } .s3 { background: #e40000; }
.s4 { background: #ff7200; } .s5 { background: #ffb900; } .s6 { background: #ffff00; }
.s7 { background: #64ff00; } .s8 { background: #25ffbf; } .s9 { background: #00e6ff; }
.s10 { background: #00a9ff; } .s11 { background: #0050ff; } .s12 { background: #0000ee; }
.s13 { background: #00009c; } .s14 { background: #000058; }
.levels { display: flex; gap: 1px; height: 20px; margin: 2px 0 0 2px; }
.levels input { width: 27px; border: 1px solid #999; background: #fff; font: inherit; padding: 0 0 0 4px; }
.stripes { flex: 1; background: repeating-linear-gradient(#999 0 1px, #f2f2f2 1px 4px); }

/* flyout and tooltip over the model */
.flyout { position: absolute; left: 30px; top: 96px; display: flex; align-items: center; height: 35px; padding-right: 1px; background: linear-gradient(#e4eef8, #f4f4f4); border-top: 1px solid #ddd; border-right: 2px solid #777; border-bottom: 2px solid #777; }
.flyout button { width: 29px; height: 29px; }
.flyout .picked { background: #9fb8e4; border: 1px solid #5878b8; }
.fgrip { width: 2px; height: 24px; margin: 0 4px; border-right: 1px solid #999; background: #fff; }
.tip { position: absolute; left: 162px; top: 133px; padding: 2px 3px; background: #fff; border: 1px solid #777; box-shadow: 3px 3px 2px #8888; white-space: nowrap; }

/* status bar */
.status { display: flex; flex: none; height: 22px; border-top: 1px solid #777; }
.find { display: flex; width: 290px; flex: none; background: #666; padding-left: 6px; border-right: 1px solid #778; }
.find input { flex: 1; min-width: 0; margin-left: 7px; border: 0; background: #fff; font: inherit; }
.hint { flex: 1; min-width: 0; padding: 3px 8px; white-space: nowrap; overflow: hidden; }
.snaps { display: flex; margin-right: 4px; }
.snaps button { width: 20px; height: 21px; }
.snaps .y { background: #ffff20; border: 1px solid #7fc0f0; }
.pow { font: 13px "DejaVu Sans", sans-serif; }
.pow sup { font-size: 9px; line-height: 0; margin-bottom: 6px; }
```
